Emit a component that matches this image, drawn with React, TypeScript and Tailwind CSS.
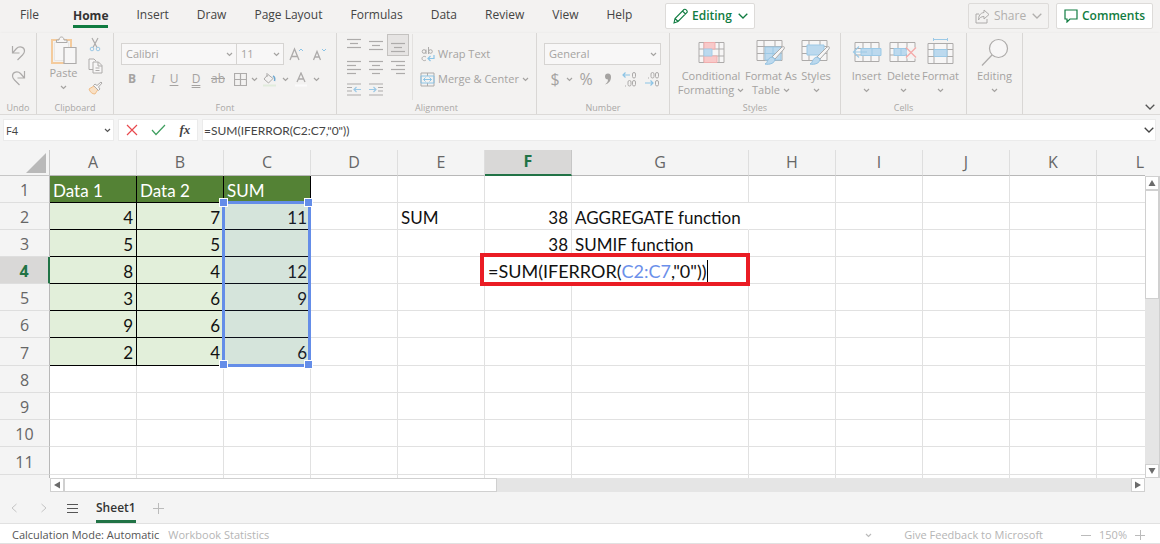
import type { ReactNode } from "react";

const tabs = ["Insert", "Draw", "Page Layout", "Formulas", "Data", "Review", "View", "Help"];

const columns = ["A", "B", "C", "D", "E", "F", "G", "H", "I", "J", "K", "L"];

const cells: Record<string, string> = {
  A1: "Data 1", B1: "Data 2", C1: "SUM",
  A2: "4", B2: "7", C2: "11",
  A3: "5", B3: "5",
  A4: "8", B4: "4", C4: "12",
  A5: "3", B5: "6", C5: "9",
  A6: "9", B6: "6",
  A7: "2", B7: "4", C7: "6",
  E2: "SUM", F2: "38", G2: "AGGREGATE function",
  F3: "38", G3: "SUMIF function",
};

const rows = [1, 2, 3, 4, 5, 6, 7, 8, 9, 10, 11];

type IconProps = { w: number; h: number; children: ReactNode; className?: string };

function Icon({ w, h, children, className = "" }: IconProps) {
  return (
    <svg
      width={w}
      height={h}
      viewBox={`0 0 ${w} ${h}`}
      fill="none"
      stroke="#adabaa"
      className={`shrink-0 ${className}`}
      aria-hidden="true"
    >
      {children}
    </svg>
  );
}

function Chevron({ className = "stroke-[#a5a3a1]" }: { className?: string }) {
  return (
    <svg width="7" height="5" viewBox="0 0 7 5" fill="none" strokeWidth="1.2" className={`shrink-0 ${className}`} aria-hidden="true">
      <path d="M1 1l2.5 2.5L6 1" />
    </svg>
  );
}

function BigChevron({ className }: { className: string }) {
  return (
    <svg width="10" height="6" viewBox="0 0 10 6" fill="none" strokeWidth="1.3" className={`shrink-0 ${className}`} aria-hidden="true">
      <path d="M.7 .8L5 5 9.3.8" />
    </svg>
  );
}

type GroupProps = { label: string; className: string; children: ReactNode };

function Group({ label, className, children }: GroupProps) {
  return (
    <section aria-label={label || "Editing"} className={`flex shrink-0 flex-col border-r border-[#d9d7d5] ${className}`}>
      <div className="h-[69px]">{children}</div>
      <p className="text-center text-[9px] leading-3 text-[#aaa8a6]">{label}</p>
    </section>
  );
}

function ToolButton({ label, className = "w-[22px]", children }: { label: string; className?: string; children: ReactNode }) {
  return (
    <button type="button" aria-label={label} className={`flex h-[22px] shrink-0 items-center justify-center ${className}`}>
      {children}
    </button>
  );
}

type LargeButtonProps = { lines: string[]; className: string; icon: ReactNode };

function LargeButton({ lines, className, icon }: LargeButtonProps) {
  return (
    <button type="button" className={`flex flex-col items-center text-[11px] leading-[14px] whitespace-nowrap text-[#a5a3a1] ${className}`}>
      <span className="mb-px flex h-8 items-center justify-center">{icon}</span>
      <span>{lines[0]}</span>
      <span className="flex h-[14px] items-center gap-[3px]">
        {lines[1]}
        <Chevron />
      </span>
    </button>
  );
}

function RibbonSelect({ label, value, className }: { label: string; value: string; className: string }) {
  return (
    <div className={`relative h-[22px] border border-[#d6d4d2] bg-[#f8f7f7] ${className}`}>
      <select aria-label={label} className="block h-full w-full appearance-none px-1 text-[11px] leading-5 text-[#a5a3a1]">
        <option>{value}</option>
      </select>
      <span className="pointer-events-none absolute top-2 right-[3px]">
        <Chevron />
      </span>
    </div>
  );
}

// Each bar is [x, width], stacked four pixels apart
function Bars({ bars, top = 1 }: { bars: [number, number][]; top?: number }) {
  return (
    <Icon w={14} h={15}>
      {bars.map(([x, width], i) => (
        <path key={i} d={`M${x} ${top + i * 4 + 0.5}h${width}`} strokeWidth="1.2" />
      ))}
    </Icon>
  );
}

function Indent({ label, right }: { label: string; right?: boolean }) {
  return (
    <ToolButton label={label}>
      <Icon w={14} h={13}>
        <path d={right ? "M0 1h14M9 4.5h5M9 8h5M0 12h14" : "M0 1h14M0 4.5h5M0 8h5M0 12h14"} />
        <path d={right ? "M0 6.5h7M4.5 4l2.5 2.5L4.5 9" : "M14 6.5H7M9.5 4L7 6.5 9.5 9"} stroke="#9cc9e6" strokeWidth="1.2" />
      </Icon>
    </ToolButton>
  );
}

function TableGrid() {
  return <path d="M1 1.5h25v20H1zM1 7.5h25M1 14.5h25M8 1.5v20M19 1.5v20" fill="#f7f6f6" />;
}

function Brush() {
  return (
    <>
      <path d="M26 8c2-1 3 0 2 2L19 20l-3-2z" fill="#f7f6f6" />
      <path d="M16 18l3 2c0 4-5 6-10 5 3-1 2-6 7-7z" fill="#bcd9ee" stroke="#8fbfe0" />
    </>
  );
}

function TopBar() {
  return (
    <header className="flex h-[33px] shrink-0 items-start text-[12px] text-[#444]">
      <nav className="flex h-[29px] items-start pt-[6px]" aria-label="Ribbon tabs">
        <a href="#file" className="ml-5 leading-[18px]">File</a>
        <a href="#home" className="mr-[14px] ml-[34px] border-b-[3px] border-[#107c41] leading-[19px] font-bold text-[#333]">Home</a>
        {tabs.map((tab) => (
          <a key={tab} href={`#${tab}`} className="px-[14px] leading-[18px] whitespace-nowrap">
            {tab}
          </a>
        ))}
      </nav>
      <button type="button" className="mt-[3px] ml-[19px] flex h-[26px] w-[90px] shrink-0 items-center justify-center gap-1 rounded-xs border border-[#dddbd9] bg-white font-semibold text-[#107c41]">
        <Icon w={15} h={16}>
          <path d="M1 15l1-4.5L11 1.5c1.5-1 4 1.5 3 3L5 13.5zM9.5 3l3 3M2 10.5l3 3" stroke="#107c41" strokeWidth="1.1" />
        </Icon>
        Editing
        <BigChevron className="ml-[2px] stroke-[#107c41]" />
      </button>
      <div className="mt-[3px] mr-[7px] ml-auto flex gap-[7px]">
        <button type="button" className="flex h-[26px] w-[81px] items-center justify-center gap-1 rounded-xs border border-[#dddbd9] text-[#b1afad]">
          <Icon w={15} h={15}>
            <path d="M4 5H1v9h11v-4M9 1l5 4.5L9 10V7.5C6 7.5 4.5 9 3.5 11 3.5 7 5 4 9 3.5z" />
          </Icon>
          Share
          <BigChevron className="ml-[2px] stroke-[#b1afad]" />
        </button>
        <button type="button" className="flex h-[26px] w-[97px] items-center justify-center gap-1 rounded-xs border border-[#dddbd9] bg-white font-semibold text-[#107c41]">
          <Icon w={14} h={14}>
            <path d="M1 1h12v9H6l-3 3v-3H1z" stroke="#107c41" strokeWidth="1.2" />
          </Icon>
          Comments
        </button>
      </div>
    </header>
  );
}

function Ribbon() {
  return (
    <div className="flex h-[82px] shrink-0 border-b border-[#dcdad8] shadow-sm">
      <Group label="Undo" className="w-[37px]">
        <div className="flex flex-col items-center gap-[3px] pt-[9px]">
          <ToolButton label="Undo">
            <Icon w={15} h={16}>
              <path d="M1.5 1v7h7M1.5 8L5.5 3.5C8 1 13.5 1.5 13.5 6c0 2-1 3-2 4L6.5 15" strokeWidth="1.2" />
            </Icon>
          </ToolButton>
          <ToolButton label="Redo">
            <Icon w={15} h={16}>
              <path d="M13.5 1v7h-7M13.5 8L9.5 3.5C7 1 1.5 1.5 1.5 6c0 2 1 3 2 4l5 5" strokeWidth="1.2" />
            </Icon>
          </ToolButton>
        </div>
      </Group>

      <Group label="Clipboard" className="w-[77px]">
        <div className="flex gap-[7px] pl-[13px]">
          <button type="button" className="flex w-[27px] flex-col items-center pt-[3px] text-[11px] leading-[14px] text-[#a5a3a1]">
            <Icon w={27} h={29}>
              <path d="M2 4h19v23H2z" stroke="#f4cb9d" strokeWidth="2" />
              <path d="M4.5 6.5h14v18h-14z" fill="#f7f6f6" stroke="#e8e6e4" />
              <path d="M6.5 6.5V4H9c0-4 5-4 5 0h3v2.5z" fill="#f7f6f6" />
              <path d="M14 11.5h12v16H14z" fill="#f7f6f6" strokeWidth="1.2" />
            </Icon>
            <span className="mt-px">Paste</span>
            <span className="mt-[5px]"><Chevron /></span>
          </button>
          <div className="flex flex-col">
            <ToolButton label="Cut">
              <Icon w={12} h={15}>
                <path d="M3 1l5 9.5M9 1L4 10.5" strokeWidth="1.2" />
                <circle cx="3" cy="12" r="1.8" stroke="#9cc9e6" />
                <circle cx="9" cy="12" r="1.8" stroke="#9cc9e6" />
              </Icon>
            </ToolButton>
            <ToolButton label="Copy">
              <Icon w={15} h={16}>
                <path d="M5 11.5H1V1h5l2 2M5 4h5.5L14 7.5V15H5zM10 4v4h4M7.5 10h4M7.5 12.5h4" fill="#f7f6f6" />
              </Icon>
            </ToolButton>
            <ToolButton label="Format Painter">
              <Icon w={15} h={14}>
                <path d="M6 5L1 8c1 3 3 5 6 5l3-4.5z" fill="#f9e0c4" stroke="#f0bd88" />
                <path d="M5.5 4.5L7 3l2 1.5L13 1l1 1-3.5 4L12 8l-1.5 1.5z" fill="#f7f6f6" />
              </Icon>
            </ToolButton>
          </div>
        </div>
      </Group>

      <Group label="Font" className="w-[223px]">
        <div className="flex items-center pt-[10px] pl-[7px]">
          <RibbonSelect label="Font" value="Calibri" className="w-[116px]" />
          <RibbonSelect label="Font size" value="11" className="w-[47px] border-l-0" />
          <ToolButton label="Increase font size" className="w-6">
            <Icon w={14} h={15}>
              <path d="M1 13L5.5 2 10 13M2.5 9.5h6" strokeWidth="1.3" />
              <path d="M10 4l2-2 2 2" stroke="#8cc4e6" />
            </Icon>
          </ToolButton>
          <ToolButton label="Decrease font size">
            <Icon w={14} h={15}>
              <path d="M1.5 13L5 4.5 8.5 13M3 10h4" strokeWidth="1.3" />
              <path d="M10 2l2 2 2-2" stroke="#8cc4e6" />
            </Icon>
          </ToolButton>
        </div>
        <div className="flex items-center pt-[3px] pl-[7px] text-[12px] text-[#a5a3a1]">
          <ToolButton label="Bold"><b>B</b></ToolButton>
          <ToolButton label="Italic" className="w-5"><i className="font-['Liberation_Serif',serif] text-[13px]">I</i></ToolButton>
          <ToolButton label="Underline"><span className="underline underline-offset-2">U</span></ToolButton>
          <ToolButton label="Double underline"><span className="underline decoration-double underline-offset-2">D</span></ToolButton>
          <ToolButton label="Strikethrough"><s>ab</s></ToolButton>
          <ToolButton label="Borders">
            <Icon w={13} h={13}>
              <path d="M.5.5h12v12H.5zM6.5.5v12M.5 6.5h12" strokeWidth="1.2" />
            </Icon>
          </ToolButton>
          <Chevron />
          <ToolButton label="Fill color" className="w-6">
            <Icon w={14} h={15}>
              <path d="M5 2.5L1 7l4.5 4L10 6.5zM4 1v4" />
              <path d="M10 4c2 1 2 3 1.5 5" stroke="#6fa8d0" strokeWidth="1.5" />
              <path d="M0 13.5h13" stroke="#e1ecdc" strokeWidth="2" />
            </Icon>
          </ToolButton>
          <Chevron />
          <ToolButton label="Font color" className="w-6">
            <Icon w={14} h={15}>
              <path d="M3 10L7 1l4 9M4.5 7h5" strokeWidth="1.3" />
              <path d="M1 13.5h12" stroke="#fafafa" strokeWidth="2" />
            </Icon>
          </ToolButton>
          <Chevron />
        </div>
      </Group>

      <Group label="Alignment" className="w-[200px]">
        <div className="flex pt-[1px]">
          <div className="ml-[6px] grid w-[66px] grid-cols-3">
            <ToolButton label="Top align"><Bars bars={[[0, 14], [3, 8], [0, 14]]} /></ToolButton>
            <ToolButton label="Middle align"><Bars bars={[[0, 14], [3, 8], [0, 14]]} top={3} /></ToolButton>
            <ToolButton label="Bottom align" className="w-[22px] border border-[#c4c2c0] bg-[#e6e4e3]">
              <Bars bars={[[0, 14], [3, 8], [0, 14]]} top={5} />
            </ToolButton>
            <ToolButton label="Align left"><Bars bars={[[0, 14], [0, 9], [0, 14], [0, 9]]} /></ToolButton>
            <ToolButton label="Center"><Bars bars={[[0, 14], [3, 8], [0, 14], [3, 8]]} /></ToolButton>
            <ToolButton label="Align right"><Bars bars={[[0, 14], [5, 9], [0, 14], [5, 9]]} /></ToolButton>
            <Indent label="Decrease indent" />
            <Indent label="Increase indent" right />
          </div>
          <div className="ml-[3px] flex flex-col gap-[3px] border-l border-[#e3e1df] pt-[9px] pl-[7px] text-[11px] text-[#a5a3a1]">
            <button type="button" className="flex h-[22px] items-center gap-[3px] whitespace-nowrap">
              <Icon w={15} h={15}>
                <circle cx="4" cy="4.5" r="1.8" />
                <path d="M6 2.5v4.5M8.5 0v7M6 10c-2-1.5-4 0-4 1.5s2 3 4 1.5" />
                <circle cx="10.5" cy="4.5" r="1.8" />
                <path d="M14 8v3.5H8M10.5 9L8 11.5l2.5 2.5" stroke="#8cc4e6" strokeWidth="1.2" />
              </Icon>
              Wrap Text
            </button>
            <button type="button" className="flex h-[22px] items-center gap-[3px] whitespace-nowrap">
              <Icon w={15} h={15}>
                <path d="M1 1h13v13H1zM7.5 1v3M7.5 11v3" />
                <path d="M1 4h13v7H1zM3.5 7.5h8M5.5 5.5l-2 2 2 2M9.5 5.5l2 2-2 2" stroke="#8cc4e6" />
              </Icon>
              Merge &amp; Center
              <Chevron />
            </button>
          </div>
        </div>
      </Group>

      <Group label="Number" className="w-[133px]">
        <div className="pt-[10px] pl-[7px]">
          <RibbonSelect label="Number format" value="General" className="w-[117px]" />
          <div className="flex items-center pt-[3px] text-[16px] text-[#a5a3a1]">
            <ToolButton label="Currency">$</ToolButton>
            <Chevron />
            <ToolButton label="Percent" className="w-[26px]">%</ToolButton>
            <ToolButton label="Comma style" className="w-[18px]">
              <Icon w={8} h={13}>
                <path d="M4 .5a3 3 0 100 6c0 2-1 3.5-3 5 4-1 6-4 6-7.5C7 2 6 .5 4 .5z" fill="#a5a3a1" stroke="none" />
              </Icon>
            </ToolButton>
            <ToolButton label="Increase decimal" className="w-6">
              <Icon w={15} h={15}>
                <path d="M8 3H1M3.5.5L1 3l2.5 2.5" stroke="#8cc4e6" strokeWidth="1.2" />
                <rect x="10.5" y=".5" width="3" height="5.5" rx="1.5" />
                <rect x="6" y="8.5" width="3" height="5.5" rx="1.5" />
                <rect x="10.5" y="8.5" width="3" height="5.5" rx="1.5" />
                <path d="M3 14h1" />
              </Icon>
            </ToolButton>
            <ToolButton label="Decrease decimal">
              <Icon w={15} h={15}>
                <path d="M0 11h8M5.5 8.5L8 11l-2.5 2.5" stroke="#8cc4e6" strokeWidth="1.2" />
                <rect x="6" y=".5" width="3" height="5.5" rx="1.5" />
                <rect x="10.5" y=".5" width="3" height="5.5" rx="1.5" />
                <rect x="10.5" y="8.5" width="3" height="5.5" rx="1.5" />
                <path d="M3 6h1" />
              </Icon>
            </ToolButton>
          </div>
        </div>
      </Group>

      <Group label="Styles" className="w-[171px]">
        <div className="flex pt-[3px] pl-[6px]">
          <LargeButton
            lines={["Conditional", "Formatting"]}
            className="w-[70px]"
            icon={
              <Icon w={27} h={23}>
                <path d="M1 1.5h25v20H1zM1 8h25M1 15h25M6 1.5v20M21 1.5v20" fill="#f7f6f6" />
                <path d="M6 1.5h11V8H6zM6 15h13v6.5H6z" fill="#f8c9c9" stroke="#f1aeae" />
                <path d="M6 8h8v7H6z" fill="#bcd9ee" stroke="#a5cde9" />
              </Icon>
            }
          />
          <LargeButton
            lines={["Format As", "Table"]}
            className="w-[50px]"
            icon={
              <Icon w={30} h={26}>
                <TableGrid />
                <path d="M9 8h16v13H9z" fill="#bcd9ee" stroke="#9cc9e6" />
                <path d="M17 8v13M9 14.5h16" stroke="#9cc9e6" />
                <Brush />
              </Icon>
            }
          />
          <LargeButton
            lines={["Styles", ""]}
            className="w-10"
            icon={
              <Icon w={30} h={26}>
                <TableGrid />
                <path d="M6 6h17v10H6z" fill="#bcd9ee" stroke="#9cc9e6" />
                <Brush />
              </Icon>
            }
          />
        </div>
      </Group>

      <Group label="Cells" className="w-[126px]">
        <div className="flex pt-[3px] pl-[7px]">
          <LargeButton
            lines={["Insert", ""]}
            className="w-[37px]"
            icon={
              <Icon w={30} h={26}>
                <path d="M3 3.5h24v19H3zM3 9.5h24M3 16h24M11 3.5v19M19 3.5v19" fill="#f7f6f6" />
                <path d="M9 9.5h20v7H9zM20 9.5v7" fill="#bcd9ee" stroke="#9cc9e6" />
                <path d="M15 13H1.5M7 7.5L1.5 13 7 18.5" stroke="#9cc9e6" strokeWidth="1.2" />
              </Icon>
            }
          />
          <LargeButton
            lines={["Delete", ""]}
            className="w-[37px]"
            icon={
              <Icon w={30} h={26}>
                <path d="M1 3.5h25v19H1zM1 9.5h25M1 16h25M9 3.5v19M18 3.5v19" fill="#f7f6f6" />
                <path d="M5 9.5h11l4 3.5-4 3.5H5zM12 9.5v7" fill="#bcd9ee" stroke="#9cc9e6" />
                <path d="M18 8.5h11v11H18z" fill="#f3f2f1" stroke="none" />
                <path d="M17 8.500l10 10M27 8.500l-10 10" stroke="#f4a9a9" strokeWidth="1.3" />
              </Icon>
            }
          />
          <LargeButton
            lines={["Format", ""]}
            className="w-[37px]"
            icon={
              <Icon w={27} h={30}>
                <path d="M1 6.5h25v20H1zM1 12.5h25M1 19.5h25M7 6.5v20M20 6.5v20" fill="#f7f6f6" />
                <path d="M7 12.5h13v7H7z" fill="#bcd9ee" stroke="#9cc9e6" />
                <path d="M6.5 2.5h14M6.5 1v3M20.5 1v3" stroke="#9cc9e6" />
              </Icon>
            }
          />
        </div>
      </Group>

      <Group label="" className="w-[56px]">
        <div className="flex justify-center pt-[3px]">
          <LargeButton
            lines={["Editing", ""]}
            className="w-10"
            icon={
              <Icon w={28} h={29}>
                <circle cx="17.5" cy="10.5" r="9" fill="#f7f6f6" strokeWidth="1.2" />
                <path d="M11 17L1 27.5" strokeWidth="1.2" />
              </Icon>
            }
          />
        </div>
      </Group>

      <button type="button" aria-label="Collapse ribbon" className="mt-auto mr-[5px] mb-1 ml-auto">
        <BigChevron className="stroke-[#555]" />
      </button>
    </div>
  );
}

function FormulaBar() {
  return (
    <div className="flex h-[35px] shrink-0 items-start gap-1 bg-[#f4f4f4] pt-1 pr-1 pl-[3px] text-[11px] text-[#444]">
      <div className="relative h-[22px] w-[111px] shrink-0 border border-[#ebebeb] bg-white">
        <input aria-label="Name box" defaultValue="F4" className="block h-full w-full px-[2px]" />
        <span className="pointer-events-none absolute top-2 right-[2px]">
          <Chevron className="stroke-[#555]" />
        </span>
      </div>
      <div className="flex h-[22px] w-[80px] shrink-0 items-center justify-around border border-[#ebebeb] bg-white">
        <button type="button" aria-label="Cancel">
          <Icon w={12} h={12}>
            <path d="M1 1l10 10M11 1L1 11" stroke="#e8494e" strokeWidth="1.2" />
          </Icon>
        </button>
        <button type="button" aria-label="Enter">
          <Icon w={15} h={12}>
            <path d="M1 6l4 4.5L14 1" stroke="#3f9e5f" strokeWidth="1.2" />
          </Icon>
        </button>
        <button type="button" aria-label="Insert function" className="font-['Liberation_Serif',serif] text-[13px] font-bold italic">
          fx
        </button>
      </div>
      <div className="relative h-[22px] min-w-0 flex-1 border border-[#ebebeb] bg-white">
        <input
          aria-label="Formula"
          defaultValue={'=SUM(IFERROR(C2:C7,"0"))'}
          className="block h-full w-full pl-px font-['Lato','Liberation_Sans',sans-serif] text-[12px]"
        />
        <button type="button" aria-label="Expand formula bar" className="absolute top-[7px] right-[1px]">
          <BigChevron className="stroke-[#444]" />
        </button>
      </div>
    </div>
  );
}

// Range outline with its four drag handles, laid over C2:C7
function RangeOutline() {
  const handle = "absolute size-[9px] border border-white bg-[#648de8]";
  return (
    <div className="pointer-events-none absolute -top-[2px] -left-[2px] z-10 h-[166px] w-[89px] border-3 border-[#648de8] bg-[#648de8]/10">
      <span className={`${handle} -top-[6px] -left-[6px]`} />
      <span className={`${handle} -top-[6px] -right-[5px]`} />
      <span className={`${handle} -bottom-[5px] -left-[6px]`} />
      <span className={`${handle} -right-[5px] -bottom-[5px]`} />
    </div>
  );
}

function CellEditor() {
  return (
    <div
      role="textbox"
      aria-label="F4"
      className="absolute -top-[4px] -left-[5px] z-10 flex h-[33px] w-[270px] items-center border-4 border-[#ea1c24] bg-white pt-[2px] pl-1 text-left text-[18px] whitespace-nowrap"
    >
      =SUM(IFERROR(<span className="text-[#6b90ea]">C2:C7</span>,"0"))
      <span className="h-[22px] w-px bg-black" />
    </div>
  );
}

function cellStyle(col: string, row: number) {
  const inTable = "ABC".includes(col) && row <= 7;
  if (inTable && row === 1) return "border-black bg-[#548235] text-white";
  if (inTable) return "border-black bg-[#e2efda] text-right";
  if (col === "F") return "border-[#e1e1e1] text-right";
  if (col === "G" && row === 2) return "border-r-transparent border-b-[#e1e1e1]";
  return "border-[#e1e1e1]";
}

function Sheet() {
  return (
    <div className="min-w-0 flex-1 overflow-hidden bg-white">
      <table className="w-[1184px] table-fixed border-separate border-spacing-0 font-['Lato','Liberation_Sans',sans-serif] text-[17px] text-[#111]">
        <colgroup>
          <col className="w-[50px]" />
          {columns.map((col) => (
            <col key={col} className={col === "G" ? "w-[177px]" : "w-[87px]"} />
          ))}
        </colgroup>
        <thead className="font-['Open_Sans','Noto_Sans',sans-serif] text-[16px] text-[#666]">
          <tr className="h-[26px]">
            <th className="border-r border-b border-[#c6c6c6] bg-[#f4f4f4] p-0">
              <svg width="20" height="20" viewBox="0 0 20 20" className="mr-[3px] ml-auto" aria-hidden="true">
                <path d="M20 0v20H0z" fill="#b9b9b9" />
              </svg>
            </th>
            {columns.map((col) => (
              <th
                key={col}
                scope="col"
                className={`border-r p-0 pb-[2px] leading-[22px] ${
                  col === "F"
                    ? "border-b-2 border-r-[#c6c6c6] border-b-[#217346] bg-[#d9d8d7] font-bold text-[#217346]"
                    : "border-b border-r-[#dedede] border-b-[#b8b8b8] bg-[#f4f4f4] font-normal"
                }`}
              >
                {col}
              </th>
            ))}
          </tr>
        </thead>
        <tbody>
          {rows.map((row) => (
            <tr key={row} className={row === 7 || row === 11 ? "h-7" : "h-[27px]"}>
              <th
                scope="row"
                className={`border-b border-b-[#dedede] p-0 pt-[2px] font-['Open_Sans','Noto_Sans',sans-serif] text-[16px] leading-[22px] ${
                  row === 4
                    ? "border-r-2 border-r-[#217346] bg-[#d9d8d7] font-bold text-[#217346]"
                    : "border-r border-r-[#b8b8b8] bg-[#f4f4f4] font-normal text-[#666]"
                }`}
              >
                {row}
              </th>
              {columns.map((col) => (
                <td key={col} className={`relative border-r border-b px-[3px] pt-[3px] pb-0 leading-[22px] whitespace-nowrap ${cellStyle(col, row)}`}>
                  {cells[`${col}${row}`]}
                  {col === "C" && row === 2 && <RangeOutline />}
                  {col === "F" && row === 4 && <CellEditor />}
                </td>
              ))}
            </tr>
          ))}
          <tr className="h-[27px]">
            <th className="border-r border-[#b8b8b8] bg-[#f4f4f4]" />
            {columns.map((col) => (
              <td key={col} className="border-r border-[#e1e1e1]" />
            ))}
          </tr>
        </tbody>
      </table>
    </div>
  );
}

function ScrollButton({ label, path }: { label: string; path: string }) {
  return (
    <button type="button" aria-label={label} className="flex size-[14px] shrink-0 items-center justify-center border border-[#d0d0d0] bg-white">
      <svg width="8" height="8" viewBox="0 0 8 8" fill="#6b6b6b" aria-hidden="true">
        <path d={path} />
      </svg>
    </button>
  );
}

export default function App() {
  return (
    <div className="flex h-screen flex-col overflow-hidden bg-[#f3f2f1] font-['Open_Sans','Noto_Sans',sans-serif]">
      <TopBar />
      <Ribbon />
      <FormulaBar />

      <div className="flex min-h-0 flex-1 bg-[#f4f4f4]">
        <Sheet />
        <div className="mt-[26px] flex w-[15px] flex-col border-r border-[#d0d0d0] bg-[#e5e5e5]">
          <ScrollButton label="Scroll up" path="M4 1l3.5 6h-7z" />
          <div className="h-[36%] border border-[#d0d0d0] bg-white" />
          <div className="flex-1" />
          <ScrollButton label="Scroll down" path="M4 7L.5 1h7z" />
        </div>
      </div>

      <div className="flex h-[14px] shrink-0 bg-[#f4f4f4] pr-[15px] pl-[50px]">
        <div className="flex flex-1 bg-[#e5e5e5]">
          <ScrollButton label="Scroll left" path="M1 4l6-3.5v7z" />
          <div className="flex-17 border border-[#d0d0d0] bg-white" />
          <div className="flex-25" />
          <ScrollButton label="Scroll right" path="M7 4L1 .5v7z" />
        </div>
      </div>

      <div className="flex h-8 shrink-0 items-center border-b border-[#e1e1e1] bg-[#f4f4f4] pt-px text-[12px]">
        <button type="button" aria-label="Previous sheet" className="ml-[10px]">
          <Icon w={8} h={10}><path d="M6.5 1L2 5l4.5 4" stroke="#c4c4c4" /></Icon>
        </button>
        <button type="button" aria-label="Next sheet" className="ml-[22px]">
          <Icon w={8} h={10}><path d="M1.5 1L6 5 1.5 9" stroke="#c4c4c4" /></Icon>
        </button>
        <button type="button" aria-label="All sheets" className="ml-[19px]">
          <Icon w={11} h={9}><path d="M0 .5h11M0 4.5h11M0 8.5h11" stroke="#555" /></Icon>
        </button>
        <button type="button" className="ml-[18px] h-full border-b-[3px] border-[#217346] pt-[3px] font-semibold text-[#333]">
          Sheet1
        </button>
        <button type="button" aria-label="New sheet" className="ml-[17px]">
          <Icon w={11} h={11}><path d="M5.500 0v11M0 5.500h11" stroke="#bbb" /></Icon>
        </button>
      </div>

      <footer className="flex h-5 shrink-0 items-center border-b border-[#e1e1e1] bg-white pt-[3px] pr-[15px] pl-3 text-[11px] whitespace-nowrap text-[#b5b5b5]">
        <span className="text-[#555]">Calculation Mode: Automatic</span>
        <button type="button" className="ml-[9px]">Workbook Statistics</button>
        <span className="ml-auto"><Chevron className="stroke-[#bbb]" /></span>
        <a href="#feedback" className="ml-[32px]">Give Feedback to Microsoft</a>
        <button type="button" aria-label="Zoom out" className="ml-[38px]">
          <Icon w={10} h={10}><path d="M0 5.5h10" stroke="#bbb" /></Icon>
        </button>
        <span className="mx-2">150%</span>
        <button type="button" aria-label="Zoom in">
          <Icon w={10} h={10}><path d="M5.5 0v10M0 5.5h10" stroke="#bbb" /></Icon>
        </button>
      </footer>
    </div>
  );
}
